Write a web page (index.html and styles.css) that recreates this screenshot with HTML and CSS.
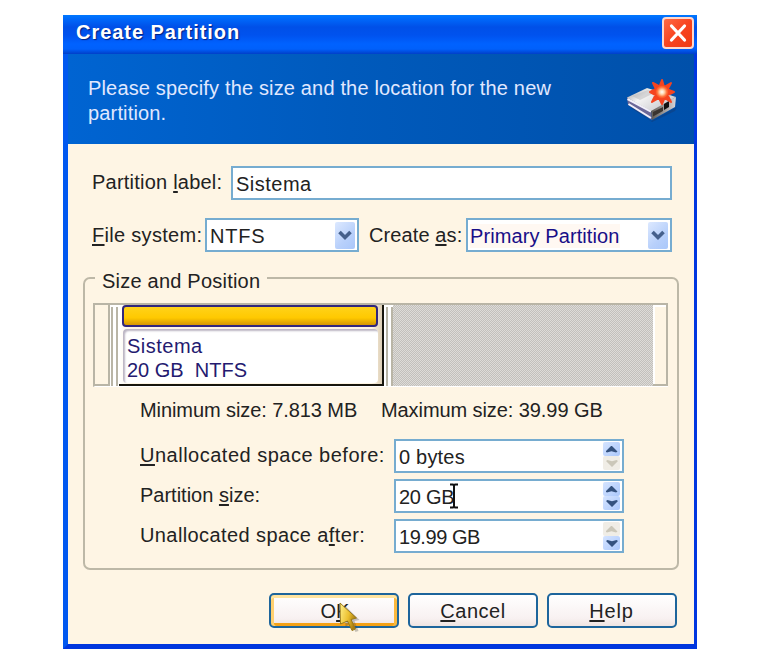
FILE: index.html
```html
<!DOCTYPE html>
<html lang="en">
<head>
<meta charset="utf-8">
<title>Create Partition</title>
<link rel="stylesheet" href="styles.css">
</head>
<body>
<main class="window">
  <header class="titlebar">
    <h1>Create Partition</h1>
    <button class="close" aria-label="Close"><svg width="32" height="32" viewBox="0 0 32 32"><path d="M9.500 9L22.500 23M22.500 9L9.500 23" stroke="#fff" stroke-width="3.2" stroke-linecap="round"/></svg></button>
  </header>
  <section class="banner">
    <p>Please specify the size and the location for the new<br>partition.</p>
    <svg class="disk" width="52" height="46" viewBox="0 0 52 46">
      <defs>
        <linearGradient id="top" x1="0" y1="0" x2="1" y2=".6"><stop offset="0" stop-color="#9a9a9c"/><stop offset=".4" stop-color="#f4f4f4"/><stop offset="1" stop-color="#c8c8cc"/></linearGradient>
        <linearGradient id="front"><stop offset="0" stop-color="#5c5650"/><stop offset="1" stop-color="#d8d6da"/></linearGradient>
        <radialGradient id="spark"><stop offset="0" stop-color="#fff"/><stop offset=".35" stop-color="#ffd8b0"/><stop offset=".75" stop-color="#ff7038"/><stop offset="1" stop-color="#fa4a20"/></radialGradient>
      </defs>
      <path d="M4 27L25 43L51 29L49 33L26 44L5 30Z" fill="#123c78" opacity=".5"/>
      <path d="M1 19L25 31L26 42L2 27Z" fill="#6c6898"/>
      <path d="M1.500 21L25 33.500M2.500 26L25 40" stroke="#f2f0fa" stroke-width="2"/>
      <path d="M25 32L50 19L49 29L26 42Z" fill="url(#front)"/>
      <path d="M1 19.500L21 10L50 19L25 33Z" fill="url(#top)"/>
      <path d="M6 18L22 12L30 14L14 22Z" fill="#b8b8ba" opacity=".5"/>
      <path d="M27 34L37 29L37 33L27 38.500Z" fill="#3a3430"/>
      <path d="M38 26L43 23L43 29L38 32Z" fill="#111"/>
      <path d="M36 2L38 9L45 5L41.500 11.500L48 14L41.500 17L45 24L38.500 20L36 26L33 20L26 24L29.500 17L24 14L30 11L27 5L33.500 8.500Z" fill="#f44420" stroke="#f44420" stroke-width="2" stroke-linejoin="round"/>
      <circle cx="36" cy="14" r="6.500" fill="url(#spark)"/>
    </svg>
  </section>
  <form class="content">
    <div class="row">
      <label class="label-name">Partition <u>l</u>abel:</label>
      <div class="field field-name"><span class="t-name">Sistema</span></div>
    </div>
    <div class="row row-selects">
      <label class="label-fs"><u>F</u>ile system:</label>
      <div class="field field-fs"><span class="t-fs">NTFS</span><i class="drop"><svg width="20" height="27" viewBox="0 0 20 27"><path d="M4.500 10L10 15.500L15.500 10" fill="none" stroke="#45608c" stroke-width="3.6"/></svg></i></div>
      <label class="label-as">Create <u>a</u>s:</label>
      <div class="field field-as"><span class="t-as">Primary Partition</span><i class="drop"><svg width="20" height="27" viewBox="0 0 20 27"><path d="M4.500 10L10 15.500L15.500 10" fill="none" stroke="#45608c" stroke-width="3.6"/></svg></i></div>
    </div>
    <fieldset class="group">
      <legend>Size and Position</legend>
      <div class="map">
        <div class="gap-before"></div>
        <div class="grip"></div>
        <div class="part">
          <div class="part-bar"></div>
          <div class="part-info"><div class="t-name">Sistema</div><div class="t-size">20 GB&nbsp; NTFS</div></div>
        </div>
        <div class="grip"></div>
        <div class="free"></div>
        <div class="gap-after"></div>
      </div>
      <div class="limits"><span>Minimum size: 7.813 MB</span><span>Maximum size: 39.99 GB</span></div>
      <div class="sizes">
        <label class="l-before"><u>U</u>nallocated space before:</label>
        <div class="field"><span class="t-before">0 bytes</span><i class="spin"><b class="up"></b><b class="down off"></b></i></div>
        <label class="l-size">Partition <u>s</u>ize:</label>
        <div class="field"><span class="t-part">20 GB</span><svg class="ibeam" width="10" height="26" viewBox="0 0 10 26"><path d="M1 1.500H4L5 2.500L6 1.500H9M5 2.500V23.500M1 24.500H4L5 23.500L6 24.500H9" fill="none" stroke="#111" stroke-width="2"/></svg><i class="spin"><b class="up"></b><b class="down"></b></i></div>
        <label class="l-after">Unallocated space a<u>f</u>ter:</label>
        <div class="field"><span class="t-after">19.99 GB</span><i class="spin"><b class="up off"></b><b class="down"></b></i></div>
      </div>
    </fieldset>
    <div class="actions">
      <button type="button" class="btn ok">O<u>K</u>
        <svg class="pointer" width="28" height="36" viewBox="0 0 28 36">
          <defs><linearGradient id="gold" x1="0" y1="0" x2="1" y2=".4"><stop offset="0" stop-color="#fff08a"/><stop offset=".6" stop-color="#ecc030"/><stop offset="1" stop-color="#a87c10"/></linearGradient></defs>
          <path d="M5 4L20 19L15 20L19 30L16 31L11 22L6 26Z" fill="#444" opacity=".3" transform="translate(1.500 0)"/>
          <path d="M2 2L18.500 17L13 18.500L17.500 28L14 29.500L9.500 20L2.500 23Z" fill="url(#gold)" stroke="#9a7a1c" stroke-width="1"/>
        </svg>
      </button>
      <button type="button" class="btn cancel"><u>C</u>ancel</button>
      <button type="button" class="btn help"><u>H</u>elp</button>
    </div>
  </form>
</main>
</body>
</html>
```
FILE: styles.css
```css
* { box-sizing: border-box; }
body { margin: 0; padding: 15px 0 0 63px; background: #fff; font: 20px/24px "Liberation Sans", Arial, sans-serif; color: #222; }
.window { width: 634px; height: 634px; border: solid #0050ee; border-width: 0 3px 5px 5px; border-color: #0040e0 #0036e0 #0036de #0058f0; background: #fef5e4; }
.titlebar { height: 39px; margin: 0 -3px 0 -5px; padding: 1px 3px 0 13px; display: flex; justify-content: space-between; align-items: flex-start; background: linear-gradient(#0078ff 0, #0068fa 4px, #0050e8 12px, #0052ee 20px, #0062ff 29px, #0060fb 34px, #003fc8 39px); }
h1 { margin: 4px 0 0; font-size: 20px; line-height: 24px; letter-spacing: .95px; color: #fff; text-shadow: 1px 1px 1px #002080; }
.close { width: 32px; height: 32px; margin: 1px 0 0; padding: 0; border: 2px solid #ffd8cc; border-radius: 4px; background: linear-gradient(135deg, #ff6a45, #f84420 50%, #ee3a12); }
.close svg { display: block; margin: -2px; }
.banner { height: 90px; padding: 22px 16px 0 20px; display: flex; justify-content: space-between; background: linear-gradient(90deg, #0064d2, #005abc 45%, #0050aa); }
.banner p { margin: 0; line-height: 25px; letter-spacing: .16px; color: #e0e8ff; }
.disk { flex: none; margin-top: 2px; }
.content { padding: 22px 16px 0 15px; }
.row { display: flex; margin-left: 9px; }
label { white-space: nowrap; }
u { text-decoration-thickness: 2px; text-underline-offset: 2px; text-decoration-skip-ink: none; }
.field { height: 34px; display: flex; align-items: center; justify-content: space-between; position: relative; padding: 1px 2px 0 3px; border: 2px solid #76acd0; background: #fff; white-space: nowrap; color: #222; }
.label-name { width: 139px; padding-top: 4px; letter-spacing: .22px; }
.field-name { width: 441px; }
.t-name { letter-spacing: .5px; }
.row-selects { margin-top: 18px; }
.row-selects label { padding-top: 5px; }
.label-fs { width: 113px; letter-spacing: .3px; }
.field-fs { width: 154px; }
.t-fs { letter-spacing: .8px; }
.label-as { width: 107px; padding-left: 10px; letter-spacing: .1px; }
.field-as { width: 206px; padding-left: 2px; color: #180e88; }
.t-as { letter-spacing: .1px; background: #fff8f2; }
.drop { width: 20px; height: 27px; margin-top: -1px; border-radius: 2px; background: linear-gradient(135deg, #dde9ff, #b8d0fb 60%, #aac7fa); }
.drop svg { display: block; }
.group { position: relative; height: 293px; width: 596px; margin: 25px 0 0; padding: 24px 9px 0 8px; border: 2px solid #bdb8a7; border-radius: 7px; }
legend { position: absolute; top: -10px; left: 10px; padding: 0 7px; background: #fef5e4; letter-spacing: .22px; white-space: nowrap; }
.map { display: flex; width: 575px; height: 84px; border-top: 2px solid #b9b5a6; border-left: 2px solid #b9b5a6; border-bottom: 1px solid #fff; background: #fff; }
.map > div { flex: none; }
.gap-before { width: 15px; background: #fef5e4; border: solid #b9b5a6; border-width: 0 2px 2px 0; }
.grip { width: 7px; border: solid #b9b5a6; border-width: 0 2px; margin: 2px 0 0 2px; background: #fff; }
.gap-before + .grip { margin: 2px 1px 0; }
.part { width: 265px; padding: 0 4px 0 3px; border: solid #17150d; border-width: 0 2px 2px 0; background: linear-gradient(90deg, #fff, #fef5e4 12px 96%, #ddceb5); margin-top: 0; height: 81px; }
.part-bar { height: 22px; width: 256px; border: 2px solid #31277c; border-radius: 4px; background: linear-gradient(#ffd21a, #ffc900 60%, #d59600); }
.part-info { height: 54px; margin: 2px 0 0 1px; padding: 5px 0 0 4px; border-radius: 4px; background: #fff; box-shadow: inset 2px 2px 2px #bbb5c3; line-height: 24px; color: #241a70; }
.t-size { letter-spacing: 0; }
.free { width: 260px; background: repeating-conic-gradient(#c2c0bc 0 25%, #dedcd8 0 50%) 0 0 / 2px 2px; }
.map > .gap-after { flex: 1; background: #fef5e4; border: solid #b9b5a6; border-width: 0 2px 2px 0; box-shadow: inset 2px 2px #fff; }
.limits { display: flex; gap: 24px; margin: 11px 0 0 47px; white-space: nowrap; letter-spacing: -.08px; }
.limits span { width: 217px; }
.sizes { display: grid; grid-template-columns: 254px 230px; row-gap: 6px; margin: 17px 0 0 47px; }
.sizes label { padding-top: 4px; }
.l-before { letter-spacing: .5px; }
.l-size { letter-spacing: 0; }
.l-after { letter-spacing: .4px; }
.t-before { letter-spacing: .2px; }
.t-part { letter-spacing: -.3px; }
.t-after { letter-spacing: -.45px; }
.spin { width: 17px; height: 28px; margin-top: -1px; }
.spin b { display: flex; height: 14px; align-items: center; justify-content: center; background: linear-gradient(135deg, #d5e4ff, #abc8fc); border-radius: 2px; color: #34527f; }
.spin b::before { content: ""; width: 12px; height: 7px; background: currentColor; clip-path: polygon(50% 0, 100% 85%, 88% 100%, 50% 82%, 12% 100%, 0 85%); }
.spin .down::before { transform: rotate(180deg); }
.spin .off { background: #f0ede6; color: #cbc7b9; }
.ibeam { position: absolute; left: 53px; top: 2px; }
.actions { display: flex; gap: 9px; margin: 23px 0 0 186px; }
.btn { position: relative; width: 130px; height: 35px; padding: 0; border: 2px solid #1d659c; border-radius: 5px; background: linear-gradient(#fff, #f8f1f1 75%, #eee4e2); font: 20px/24px "Liberation Sans", Arial, sans-serif; color: #222; }
.ok { box-shadow: inset 0 3px #ffe4a0, inset 3px 0 #ffd070, inset -3px 0 #fbb93e, inset 0 -3px #f5a217; padding-left: 2px; }
.cancel { letter-spacing: .5px; }
.help { letter-spacing: .8px; padding-right: 1px; }
.pointer { position: absolute; left: 67px; top: 6px; }
```
